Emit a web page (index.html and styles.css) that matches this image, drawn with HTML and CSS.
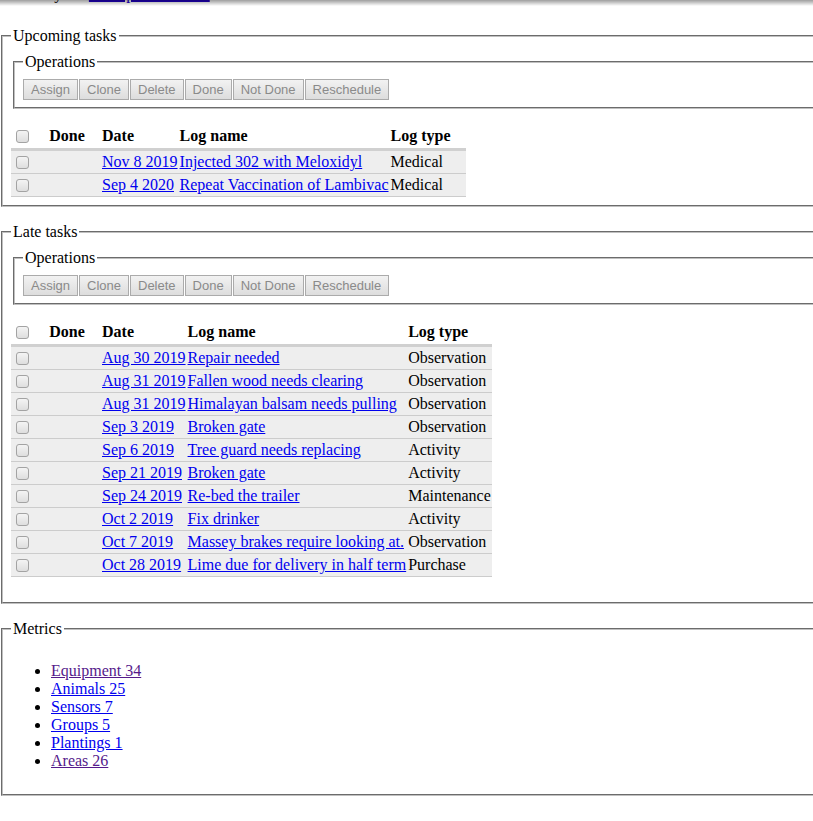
FILE: index.html
```
<!DOCTYPE html>
<html>
<head>
<meta charset="utf-8">
<title>Summary</title>
<link rel="stylesheet" href="styles.css">
</head>
<body>
<div class="shade"></div>
<div class="page-title">Summary for <a href="#">Example Farm Ltd</a></div>

<fieldset class="panel">
  <legend>Upcoming tasks</legend>
  <fieldset class="ops">
    <legend>Operations</legend>
    <div class="btns"><button disabled>Assign</button><button disabled>Clone</button><button disabled>Delete</button><button disabled>Done</button><button disabled>Not Done</button><button disabled>Reschedule</button></div>
  </fieldset>
  <table class="tasks">
    <thead>
      <tr><th class="sel"><input type="checkbox"></th><th class="done">Done</th><th>Date</th><th>Log name</th><th>Log type</th></tr>
    </thead>
    <tbody>
      <tr><td><input type="checkbox"></td><td></td><td><a href="#">Nov 8 2019</a></td><td><a href="#">Injected 302 with Meloxidyl</a></td><td>Medical</td></tr>
      <tr><td><input type="checkbox"></td><td></td><td><a href="#">Sep 4 2020</a></td><td><a href="#">Repeat Vaccination of Lambivac</a></td><td>Medical</td></tr>
    </tbody>
  </table>
</fieldset>

<fieldset class="panel">
  <legend>Late tasks</legend>
  <fieldset class="ops">
    <legend>Operations</legend>
    <div class="btns"><button disabled>Assign</button><button disabled>Clone</button><button disabled>Delete</button><button disabled>Done</button><button disabled>Not Done</button><button disabled>Reschedule</button></div>
  </fieldset>
  <table class="tasks late">
    <thead>
      <tr><th class="sel"><input type="checkbox"></th><th class="done">Done</th><th>Date</th><th>Log name</th><th>Log type</th></tr>
    </thead>
    <tbody>
      <tr><td><input type="checkbox"></td><td></td><td><a href="#">Aug 30 2019</a></td><td><a href="#">Repair needed</a></td><td>Observation</td></tr>
      <tr><td><input type="checkbox"></td><td></td><td><a href="#">Aug 31 2019</a></td><td><a href="#">Fallen wood needs clearing</a></td><td>Observation</td></tr>
      <tr><td><input type="checkbox"></td><td></td><td><a href="#">Aug 31 2019</a></td><td><a href="#">Himalayan balsam needs pulling</a></td><td>Observation</td></tr>
      <tr><td><input type="checkbox"></td><td></td><td><a href="#">Sep 3 2019</a></td><td><a href="#">Broken gate</a></td><td>Observation</td></tr>
      <tr><td><input type="checkbox"></td><td></td><td><a href="#">Sep 6 2019</a></td><td><a href="#">Tree guard needs replacing</a></td><td>Activity</td></tr>
      <tr><td><input type="checkbox"></td><td></td><td><a href="#">Sep 21 2019</a></td><td><a href="#">Broken gate</a></td><td>Activity</td></tr>
      <tr><td><input type="checkbox"></td><td></td><td><a href="#">Sep 24 2019</a></td><td><a href="#">Re-bed the trailer</a></td><td>Maintenance</td></tr>
      <tr><td><input type="checkbox"></td><td></td><td><a href="#">Oct 2 2019</a></td><td><a href="#">Fix drinker</a></td><td>Activity</td></tr>
      <tr><td><input type="checkbox"></td><td></td><td><a href="#">Oct 7 2019</a></td><td><a href="#">Massey brakes require looking at.</a></td><td>Observation</td></tr>
      <tr><td><input type="checkbox"></td><td></td><td><a href="#">Oct 28 2019</a></td><td><a href="#">Lime due for delivery in half term</a></td><td>Purchase</td></tr>
    </tbody>
  </table>
</fieldset>

<fieldset class="panel">
  <legend>Metrics</legend>
  <ul class="metrics">
    <li><a class="visited" href="#">Equipment 34</a></li>
    <li><a href="#">Animals 25</a></li>
    <li><a href="#">Sensors 7</a></li>
    <li><a href="#">Groups 5</a></li>
    <li><a href="#">Plantings 1</a></li>
    <li><a class="visited" href="#">Areas 26</a></li>
  </ul>
</fieldset>
</body>
</html>
```

FILE: styles.css
```
html {
  overflow: hidden;
}

body {
  margin: 0;
  font-family: "Liberation Serif", "Times New Roman", serif;
  font-size: 16px;
  line-height: 18px;
  color: #000;
  background: #fff;
}

a {
  color: #0000ee;
}

a.visited {
  color: #551a8b;
}

.shade {
  position: fixed;
  top: 0;
  left: 0;
  right: 0;
  height: 6px;
  background: linear-gradient(rgba(0, 0, 0, 0.38), rgba(0, 0, 0, 0));
  pointer-events: none;
  z-index: 5;
}

.page-title {
  margin: -15px 0 24px 0;
  height: 18px;
  white-space: nowrap;
}

.page-title a {
  text-decoration-thickness: 2px;
  color: #2200cc;
}

fieldset {
  border: 2px groove #c0c0c0;
  min-inline-size: min-content;
}

legend {
  padding: 0 2px;
  line-height: 18px;
}

.panel {
  margin: 0 0 16px 1px;
  padding: 8px;
  width: 880px;
}

.ops {
  margin: 0 2px;
  padding: 8px 8px 7px 8px;
}

.btns {
  display: flex;
  gap: 1px;
}

.btns button {
  margin: 0;
  font-family: "Liberation Sans", Arial, sans-serif;
  font-size: 13px;
  line-height: 15px;
  padding: 2px 7px;
  border: 1px solid #ababab;
  border-radius: 0;
  background: linear-gradient(#f2f2f2, #dddddd);
  color: #8a8a8a;
}

.tasks {
  border-collapse: collapse;
  margin-top: 16px;
}

.tasks.late {
  margin-bottom: 17px;
}

.tasks th,
.tasks td {
  padding: 1px;
  text-align: left;
  vertical-align: middle;
  white-space: nowrap;
}

.tasks th {
  padding: 1px 15px 2px 1px;
  border-bottom: 3px solid #d0d0d0;
  font-weight: bold;
}

.tasks th.sel {
  padding: 1px 1px 2px 1px;
}

.tasks th.done {
  width: 66px;
  padding: 1px 1px 2px 1px;
  text-align: center;
}

.tasks tbody tr {
  background: #eeeeee;
}

.tasks tbody td {
  border-bottom: 1px solid #cccccc;
}

.tasks input[type="checkbox"] {
  appearance: none;
  -webkit-appearance: none;
  display: block;
  box-sizing: border-box;
  width: 13px;
  height: 13px;
  margin: 4px 3px 3px 4px;
  border: 1px solid #a3a3a3;
  border-radius: 3px;
  background: linear-gradient(#f4f4f4, #dedede);
}

.metrics {
  margin: 16px 0;
  padding-left: 40px;
}

.metrics li {
  line-height: 18px;
}
```
